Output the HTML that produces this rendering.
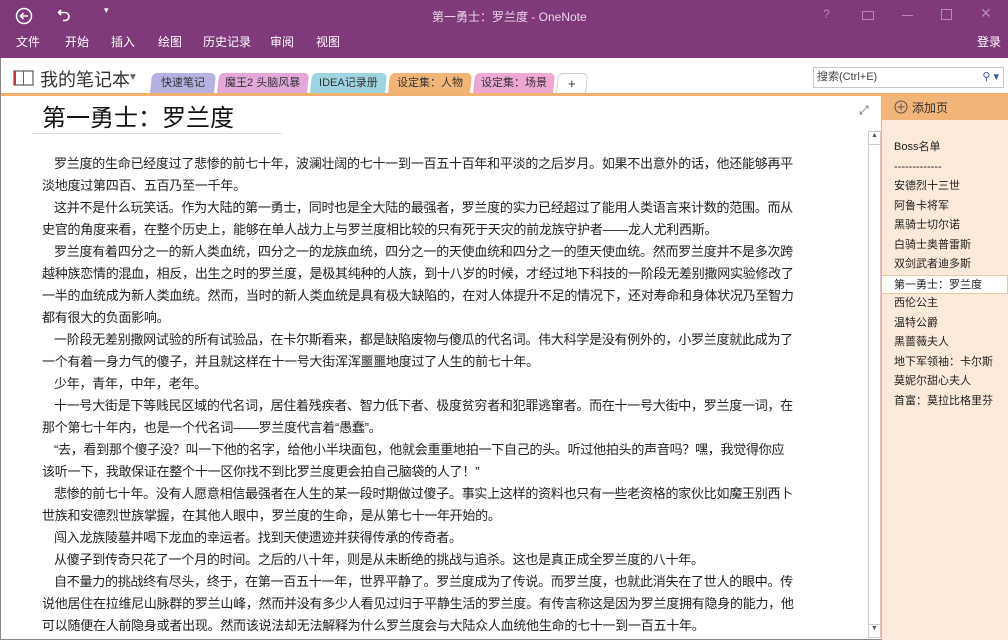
<!DOCTYPE html>
<html><head><meta charset="utf-8"><style>
*{margin:0;padding:0;box-sizing:border-box}
body{width:1008px;height:640px;overflow:hidden;background:#fff;font-family:"Liberation Sans","Noto Sans CJK SC",sans-serif;position:relative}
.a{position:absolute}
#top{left:0;top:0;width:1008px;height:58px;background:#80397B;color:#fff}
.menu{font-size:12px;top:33px;color:#fff}
.tab{position:absolute;top:73px;height:21px;font-size:11px;color:#333;text-align:center;line-height:20px;border-radius:5px 5px 0 0;transform:skewX(-6deg)}
.tab span{display:inline-block;transform:skewX(6deg)}
#body{left:42px;top:153px;font-size:13px;color:#222;line-height:22px;white-space:nowrap;letter-spacing:-0.26px}
#body div{height:22px}
.i{padding-left:12px}
#pages{left:882px;top:96px;width:126px;height:544px;background:#FBE9D9}
#pages div.p{font-size:11px;color:#222;height:19.5px;line-height:19.5px;padding-left:12px}
</style></head><body>
<div id="top" class="a">
 <svg class="a" style="left:15px;top:7px" width="18" height="18"><circle cx="9" cy="9" r="7.5" fill="none" stroke="#fff" stroke-width="1.5"/><path d="M13 9H5.5M8.5 6L5.5 9l3 3" fill="none" stroke="#fff" stroke-width="1.6"/></svg>
 <svg class="a" style="left:57px;top:8px" width="14" height="14"><path d="M4 2L1.5 4.5 4 7M1.5 4.5H8a4 4 0 0 1 0 8H6" fill="none" stroke="#fff" stroke-width="1.6"/></svg>
 <div class="a" style="left:104px;top:5px;font-size:9px">&#9662;</div>
 <div class="a" style="left:432px;top:8px;font-size:12px;color:#e8d8e6">第一勇士：罗兰度 - OneNote</div>
 <div class="a" style="left:823px;top:7px;font-size:12px;color:#b58ab2">?</div>
 <div class="a" style="left:862px;top:11px;width:12px;height:9px;border:1px solid #b58ab2"></div>
 <div class="a" style="left:902px;top:15px;width:11px;height:1px;background:#b58ab2"></div>
 <div class="a" style="left:941px;top:9px;width:11px;height:11px;border:1px solid #b58ab2"></div>
 <div class="a" style="left:980px;top:5px;font-size:14px;color:#b58ab2">✕</div>
 <div class="a menu" style="left:16px">文件</div>
 <div class="a menu" style="left:65px">开始</div>
 <div class="a menu" style="left:111px">插入</div>
 <div class="a menu" style="left:158px">绘图</div>
 <div class="a menu" style="left:203px">历史记录</div>
 <div class="a menu" style="left:270px">审阅</div>
 <div class="a menu" style="left:316px">视图</div>
 <div class="a menu" style="left:977px">登录</div>
</div>
<div class="a" style="left:0;top:58px;width:1px;height:582px;background:#888"></div>
<div class="a" style="left:0;top:639px;width:1008px;height:1px;background:#888"></div>
<svg class="a" style="left:13px;top:69px" width="22" height="18"><rect x="1" y="2" width="19" height="14" fill="none" stroke="#666" stroke-width="1.3"/><line x1="10.5" y1="2" x2="10.5" y2="16" stroke="#666"/><rect x="1" y="2" width="2" height="14" fill="#c33"/></svg>
<div class="a" style="left:40px;top:66px;font-size:18px;color:#333">我的笔记本</div>
<div class="a" style="left:128px;top:72px;font-size:10px;color:#666">&#9660;</div>
<div class="tab" style="left:151px;width:64px;background:#B5B1E2"><span>快速笔记</span></div>
<div class="tab" style="left:218px;width:90px;background:#E1A8D9"><span>魔王2 头脑风暴</span></div>
<div class="tab" style="left:311px;width:75px;background:#9DD4E2"><span>IDEA记录册</span></div>
<div class="tab" style="left:389px;width:82px;background:#F2B577"><span>设定集：人物</span></div>
<div class="tab" style="left:474px;width:80px;background:#EFA7D4"><span>设定集：场景</span></div>
<div class="tab" style="left:557px;width:30px;background:#fff;border:1px solid #ccc;border-bottom:none"><span style="font-size:13px">+</span></div>
<div class="a" style="left:813px;top:67px;width:191px;height:21px;border:1px solid #c8c8c8;font-size:11px;color:#444;line-height:19px;padding-left:3px">搜索(Ctrl+E)<span style="position:absolute;right:4px;color:#2a5aa8">⚲ ▾</span></div>
<div class="a" style="left:1px;top:93px;width:1007px;height:3px;background:#F2B171"></div>
<div class="a" style="left:882px;top:96px;width:126px;height:24px;background:#F2B577"></div>
<svg class="a" style="left:894px;top:100px" width="14" height="14"><circle cx="7" cy="7" r="6" fill="none" stroke="#555"/><path d="M7 3.5v7M3.5 7h7" stroke="#555"/></svg>
<div class="a" style="left:912px;top:99px;font-size:12px;color:#333">添加页</div>
<div id="pages" class="a" style="top:120px;height:520px;padding-top:18px">
 <div class="p">Boss名单</div><div class="p">-------------</div>
 <div class="p">安德烈十三世</div><div class="p">阿鲁卡将军</div><div class="p">黑骑士切尔诺</div><div class="p">白骑士奥普雷斯</div><div class="p">双剑武者迪多斯</div>
 <div class="p" style="background:#fff;border:1px solid #e8c9a8;margin-left:-1px">第一勇士：罗兰度</div>
 <div class="p">西伦公主</div><div class="p">温特公爵</div><div class="p">黑蔷薇夫人</div><div class="p">地下军领袖：卡尔斯</div><div class="p">莫妮尔甜心夫人</div><div class="p">首富：莫拉比格里芬</div>
</div>
<div class="a" style="left:881px;top:96px;width:1px;height:544px;background:#F2B171"></div>
<div class="a" style="left:868px;top:131px;width:13px;height:507px;border:1px solid #ccc;background:#fff"></div>
<div class="a" style="left:868px;top:131px;width:13px;height:14px;border:1px solid #ccc;font-size:7px;text-align:center;color:#555">▲</div>
<div class="a" style="left:868px;top:624px;width:13px;height:14px;border:1px solid #ccc;font-size:7px;text-align:center;color:#555">▼</div>
<div class="a" style="left:859px;top:103px;font-size:12px;color:#555">⤢</div>
<div class="a" style="left:42px;top:98px;font-size:24px;color:#111">第一勇士：罗兰度</div>
<div class="a" style="left:32px;top:133px;width:250px;height:1px;background:#ddd"></div>
<div id="body" class="a">
<div class="i">罗兰度的生命已经度过了悲惨的前七十年，波澜壮阔的七十一到一百五十百年和平淡的之后岁月。如果不出意外的话，他还能够再平</div>
<div>淡地度过第四百、五百乃至一千年。</div>
<div class="i">这并不是什么玩笑话。作为大陆的第一勇士，同时也是全大陆的最强者，罗兰度的实力已经超过了能用人类语言来计数的范围。而从</div>
<div>史官的角度来看，在整个历史上，能够在单人战力上与罗兰度相比较的只有死于天灾的前龙族守护者——龙人尤利西斯。</div>
<div class="i">罗兰度有着四分之一的新人类血统，四分之一的龙族血统，四分之一的天使血统和四分之一的堕天使血统。然而罗兰度并不是多次跨</div>
<div>越种族恋情的混血，相反，出生之时的罗兰度，是极其纯种的人族，到十八岁的时候，才经过地下科技的一阶段无差别撒网实验修改了</div>
<div>一半的血统成为新人类血统。然而，当时的新人类血统是具有极大缺陷的，在对人体提升不足的情况下，还对寿命和身体状况乃至智力</div>
<div>都有很大的负面影响。</div>
<div class="i">一阶段无差别撒网试验的所有试验品，在卡尔斯看来，都是缺陷废物与傻瓜的代名词。伟大科学是没有例外的，小罗兰度就此成为了</div>
<div>一个有着一身力气的傻子，并且就这样在十一号大街浑浑噩噩地度过了人生的前七十年。</div>
<div class="i">少年，青年，中年，老年。</div>
<div class="i">十一号大街是下等贱民区域的代名词，居住着残疾者、智力低下者、极度贫穷者和犯罪逃窜者。而在十一号大街中，罗兰度一词，在</div>
<div>那个第七十年内，也是一个代名词——罗兰度代言着“愚蠢”。</div>
<div class="i">“去，看到那个傻子没？叫一下他的名字，给他小半块面包，他就会重重地拍一下自己的头。听过他拍头的声音吗？嘿，我觉得你应</div>
<div>该听一下，我敢保证在整个十一区你找不到比罗兰度更会拍自己脑袋的人了！”</div>
<div class="i">悲惨的前七十年。没有人愿意相信最强者在人生的某一段时期做过傻子。事实上这样的资料也只有一些老资格的家伙比如魔王别西卜</div>
<div>世族和安德烈世族掌握，在其他人眼中，罗兰度的生命，是从第七十一年开始的。</div>
<div class="i">闯入龙族陵墓并喝下龙血的幸运者。找到天使遗迹并获得传承的传奇者。</div>
<div class="i">从傻子到传奇只花了一个月的时间。之后的八十年，则是从未断绝的挑战与追杀。这也是真正成全罗兰度的八十年。</div>
<div class="i">自不量力的挑战终有尽头，终于，在第一百五十一年，世界平静了。罗兰度成为了传说。而罗兰度，也就此消失在了世人的眼中。传</div>
<div>说他居住在拉维尼山脉群的罗兰山峰，然而并没有多少人看见过归于平静生活的罗兰度。有传言称这是因为罗兰度拥有隐身的能力，他</div>
<div>可以随便在人前隐身或者出现。然而该说法却无法解释为什么罗兰度会与大陆众人血统他生命的七十一到一百五十年。</div>
</div>
</body></html>
